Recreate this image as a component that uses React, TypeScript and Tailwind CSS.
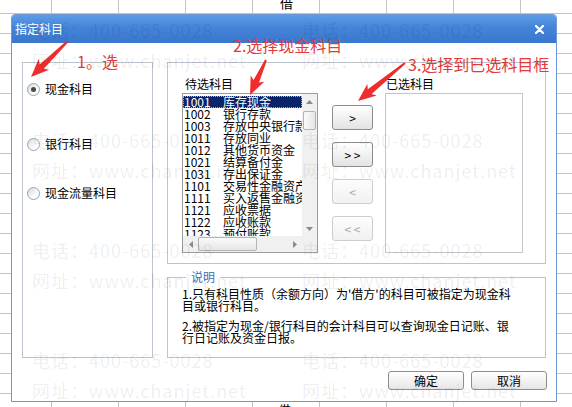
import React from 'react';

const accounts: [string, string][] = [
  ['1001', '库存现金'],
  ['1002', '银行存款'],
  ['1003', '存放中央银行款项'],
  ['1011', '存放同业'],
  ['1012', '其他货币资金'],
  ['1021', '结算备付金'],
  ['1031', '存出保证金'],
  ['1101', '交易性金融资产'],
  ['1111', '买入返售金融资产'],
  ['1121', '应收票据'],
  ['1122', '应收账款'],
  ['1123', '预付账款'],
];

// tapered red annotation arrow, tail -> tip
function arrowPoints(x1: number, y1: number, x2: number, y2: number) {
  const dx = x2 - x1;
  const dy = y2 - y1;
  const len = Math.hypot(dx, dy);
  const ux = dx / len;
  const uy = dy / len;
  const nx = -uy;
  const ny = ux;
  const bx = x2 - ux * 15;
  const by = y2 - uy * 15;
  const p = (x: number, y: number) => `${x.toFixed(1)},${y.toFixed(1)}`;
  return [
    p(x1 + nx * 1, y1 + ny * 1),
    p(bx + nx * 3, by + ny * 3),
    p(bx + nx * 7.5 - ux * 3, by + ny * 7.5 - uy * 3),
    p(x2, y2),
    p(bx - nx * 7.5 - ux * 3, by - ny * 7.5 - uy * 3),
    p(bx - nx * 3, by - ny * 3),
    p(x1 - nx * 1, y1 - ny * 1),
  ].join(' ');
}

const Radio = ({ label, checked }: { label: string; checked?: boolean }) => (
  <div className="flex h-[14px] items-center gap-[5px]">
    <div className="flex h-[13px] w-[13px] items-center justify-center rounded-full border border-[#9aa3ad] bg-[linear-gradient(135deg,#d9d9d9,#ffffff_70%)]">
      {checked && <div className="h-[5px] w-[5px] rounded-full bg-[#4a4a4a]" />}
    </div>
    <span className="text-[12px] leading-[14px] text-black">{label}</span>
  </div>
);

const MoveButton = ({ label, disabled }: { label: string; disabled?: boolean }) => (
  <div
    className={
      disabled
        ? 'flex h-[25px] w-[41px] items-center justify-center rounded-[3px] border border-[#cdcdcd] bg-[linear-gradient(to_bottom,#fdfdfd,#f1f1f1)] text-[12px] text-[#a9a9a9]'
        : 'flex h-[25px] w-[41px] items-center justify-center rounded-[3px] border border-[#8c8c8c] bg-[linear-gradient(to_bottom,#ffffff,#e3e3e3)] text-[12px] text-black'
    }
  >
    {label}
  </div>
);

const ScrollArrow = ({ dir }: { dir: 'up' | 'down' | 'left' | 'right' }) => {
  const pts = {
    up: '0,4 3.5,0 7,4',
    down: '0,0 3.5,4 7,0',
    left: '4,0 0,3.5 4,7',
    right: '0,0 4,3.5 0,7',
  }[dir];
  const w = dir === 'up' || dir === 'down' ? 7 : 4;
  const h = dir === 'up' || dir === 'down' ? 4 : 7;
  return (
    <svg width={w} height={h} viewBox={`0 0 ${w} ${h}`}>
      <polygon points={pts} fill="#8a8a8a" />
    </svg>
  );
};

const CandidateList = () => (
  <div className="flex h-[160px] w-[136px] flex-col border border-[#9c9c9c] bg-white">
    <div className="flex min-h-0 flex-1">
      <div className="flex-1 overflow-hidden pt-[2px] text-[12px] leading-[12px] text-black">
        {accounts.map(([code, name], i) => (
          <div
            key={code}
            className={
              i === 0
                ? 'flex h-[12px] whitespace-nowrap bg-[#0a246a] text-white outline-1 outline-dotted outline-[#c8b46a] -outline-offset-1'
                : 'flex h-[12px] whitespace-nowrap'
            }
          >
            <span className="w-[40px] shrink-0 pl-[1px]">{code}</span>
            <span>{name}</span>
          </div>
        ))}
      </div>
      <div className="flex w-[15px] flex-col items-center bg-[#f0f0f0]">
        <div className="flex h-[15px] items-center justify-center">
          <ScrollArrow dir="up" />
        </div>
        <div className="mt-[2px] h-[19px] w-[13px] rounded-[2px] border border-[#b3b3b3] bg-[linear-gradient(to_right,#fafafa,#e6e6e6)]" />
        <div className="flex-1" />
        <div className="flex h-[15px] items-center justify-center">
          <ScrollArrow dir="down" />
        </div>
      </div>
    </div>
    <div className="flex h-[16px] items-center bg-[#f0f0f0]">
      <div className="flex w-[15px] items-center justify-center">
        <ScrollArrow dir="left" />
      </div>
      <div className="h-[14px] w-[59px] rounded-[2px] border border-[#b3b3b3] bg-[linear-gradient(to_bottom,#fafafa,#e6e6e6)]" />
      <div className="flex-1" />
      <div className="flex w-[15px] items-center justify-center">
        <ScrollArrow dir="right" />
      </div>
      <div className="h-[16px] w-[15px] bg-[#f0f0f0]" />
    </div>
  </div>
);

const DialogButton = ({ label }: { label: string }) => (
  <div className="flex h-[19px] w-[76px] items-center justify-center rounded-[3px] border border-[#8e8e8e] bg-[linear-gradient(to_bottom,#ffffff,#e6e6e6)] text-[12px] leading-[12px] text-black">
    {label}
  </div>
);

const watermarkRows = [0, 1, 2, 3];

export default function App() {
  return (
    <div className="relative flex h-[407px] w-[572px] flex-col overflow-hidden bg-white bg-[image:linear-gradient(to_right,#c4c4c4_1px,transparent_1px),linear-gradient(to_bottom,#c4c4c4_1px,transparent_1px)] bg-[size:67px_20px] bg-[position:51px_13px] font-['Noto_Sans_CJK_SC','Noto_Sans',sans-serif]">
      {/* sheet cell above the dialog */}
      <div className="h-[14px] shrink-0 overflow-hidden pl-[280px]">
        <span className="-mt-[4px] block text-[13px] leading-[13px] text-black">借</span>
      </div>

      {/* dialog */}
      <div className="ml-[11px] flex h-[388px] w-[546px] shrink-0 flex-col rounded-t-[4px] border border-[#6c98d4] bg-white">
        <div className="flex h-[28px] shrink-0 items-center justify-between rounded-t-[3px] bg-[linear-gradient(to_bottom,#5d9ce6,#4384d9_45%,#3a77cd)] pl-[3px] pr-[12px]">
          <span className="text-[12px] leading-[12px] text-white">指定科目</span>
          <svg width="9" height="9" viewBox="0 0 9 9">
            <path d="M1 1 L8 8 M8 1 L1 8" stroke="#ffffff" strokeWidth="2.2" strokeLinecap="round" />
          </svg>
        </div>

        <div className="flex flex-1 flex-col pl-[10px] pr-[9px] pt-[19px]">
          <div className="flex gap-[14px]">
            {/* account type */}
            <div className="flex h-[296px] w-[131px] flex-col border border-[#bcc3cc] pl-[4px] pt-[19px]">
              <Radio label="现金科目" checked />
              <div className="mt-[41px]">
                <Radio label="银行科目" />
              </div>
              <div className="mt-[35px]">
                <Radio label="现金流量科目" />
              </div>
            </div>

            <div className="flex w-[379px] flex-col">
              {/* pick accounts */}
              <div className="flex h-[202px] items-start border border-[#bcc3cc] pl-[14px] pt-[14px]">
                <div className="flex flex-col gap-[2px]">
                  <span className="h-[14px] pl-[3px] text-[12px] leading-[14px] text-black">待选科目</span>
                  <CandidateList />
                </div>
                <div className="ml-[14px] mt-[28px] flex flex-col gap-[12px]">
                  <MoveButton label=">" />
                  <MoveButton label="> >" />
                  <MoveButton label="<" disabled />
                  <MoveButton label="< <" disabled />
                </div>
                <div className="ml-[12px] flex flex-col gap-[2px]">
                  <span className="h-[14px] pl-[1px] text-[12px] leading-[14px] text-black">已选科目</span>
                  <div className="h-[160px] w-[138px] border border-[#c2c6cb] bg-white" />
                </div>
              </div>

              {/* notes */}
              <fieldset className="mt-[7px] h-[87px] border border-[#bcc3cc] pl-[14px]">
                <legend className="ml-[4px] px-[5px] text-[12px] leading-[12px] text-[#3d70b8]">说明</legend>
                <div className="pt-[5px] text-[12px] leading-[12px] text-black">
                  <div className="whitespace-nowrap">1.只有科目性质（余额方向）为'借方'的科目可被指定为现金科</div>
                  <div className="whitespace-nowrap">目或银行科目。</div>
                  <div className="mt-[8px] whitespace-nowrap">2.被指定为现金/银行科目的会计科目可以查询现金日记账、银</div>
                  <div className="whitespace-nowrap">行日记账及资金日报。</div>
                </div>
              </fieldset>
            </div>
          </div>

          <div className="mt-[13px] flex justify-end gap-[7px]">
            <DialogButton label="确定" />
            <DialogButton label="取消" />
          </div>
        </div>
      </div>

      {/* sheet cell below the dialog */}
      <div className="h-[6px] shrink-0 overflow-hidden pl-[278px]">
        <span className="mt-[1px] block text-[13px] leading-[13px] text-black">借</span>
      </div>

      {/* red annotations */}
      <svg className="pointer-events-none absolute inset-0" width="572" height="407" viewBox="0 0 572 407">
        <polygon points={arrowPoints(68, 41, 31, 77)} fill="#ee2d2d" />
        <polygon points={arrowPoints(266, 60, 250, 95)} fill="#ee2d2d" />
        <polygon points={arrowPoints(405, 63, 358, 101)} fill="#ee2d2d" />
      </svg>
      <span className="pointer-events-none absolute left-[77px] top-[52px] text-[16px] leading-[18px] text-[#e53a3a]">1。选</span>
      <span className="pointer-events-none absolute left-[233px] top-[36px] text-[16px] leading-[18px] text-[#e53a3a]">2.选择现金科目</span>
      <span className="pointer-events-none absolute left-[408px] top-[55px] text-[16px] leading-[18px] text-[#e53a3a]">3.选择到已选科目框</span>

      {/* watermark */}
      <div className="pointer-events-none absolute inset-0 flex flex-col gap-[50px] pl-[32px] pt-[15px] text-[18px] leading-[30px] tracking-[1px] text-[rgba(0,0,0,0.075)]">
        {watermarkRows.map((r) => (
          <div key={r} className="flex">
            {[0, 1].map((c) => (
              <div key={c} className="flex w-[270px] shrink-0 flex-col whitespace-nowrap">
                <span className="h-[30px]">电话：400-665-0028</span>
                <span className="h-[30px]">网址：www.chanjet.net</span>
              </div>
            ))}
          </div>
        ))}
      </div>
    </div>
  );
}
